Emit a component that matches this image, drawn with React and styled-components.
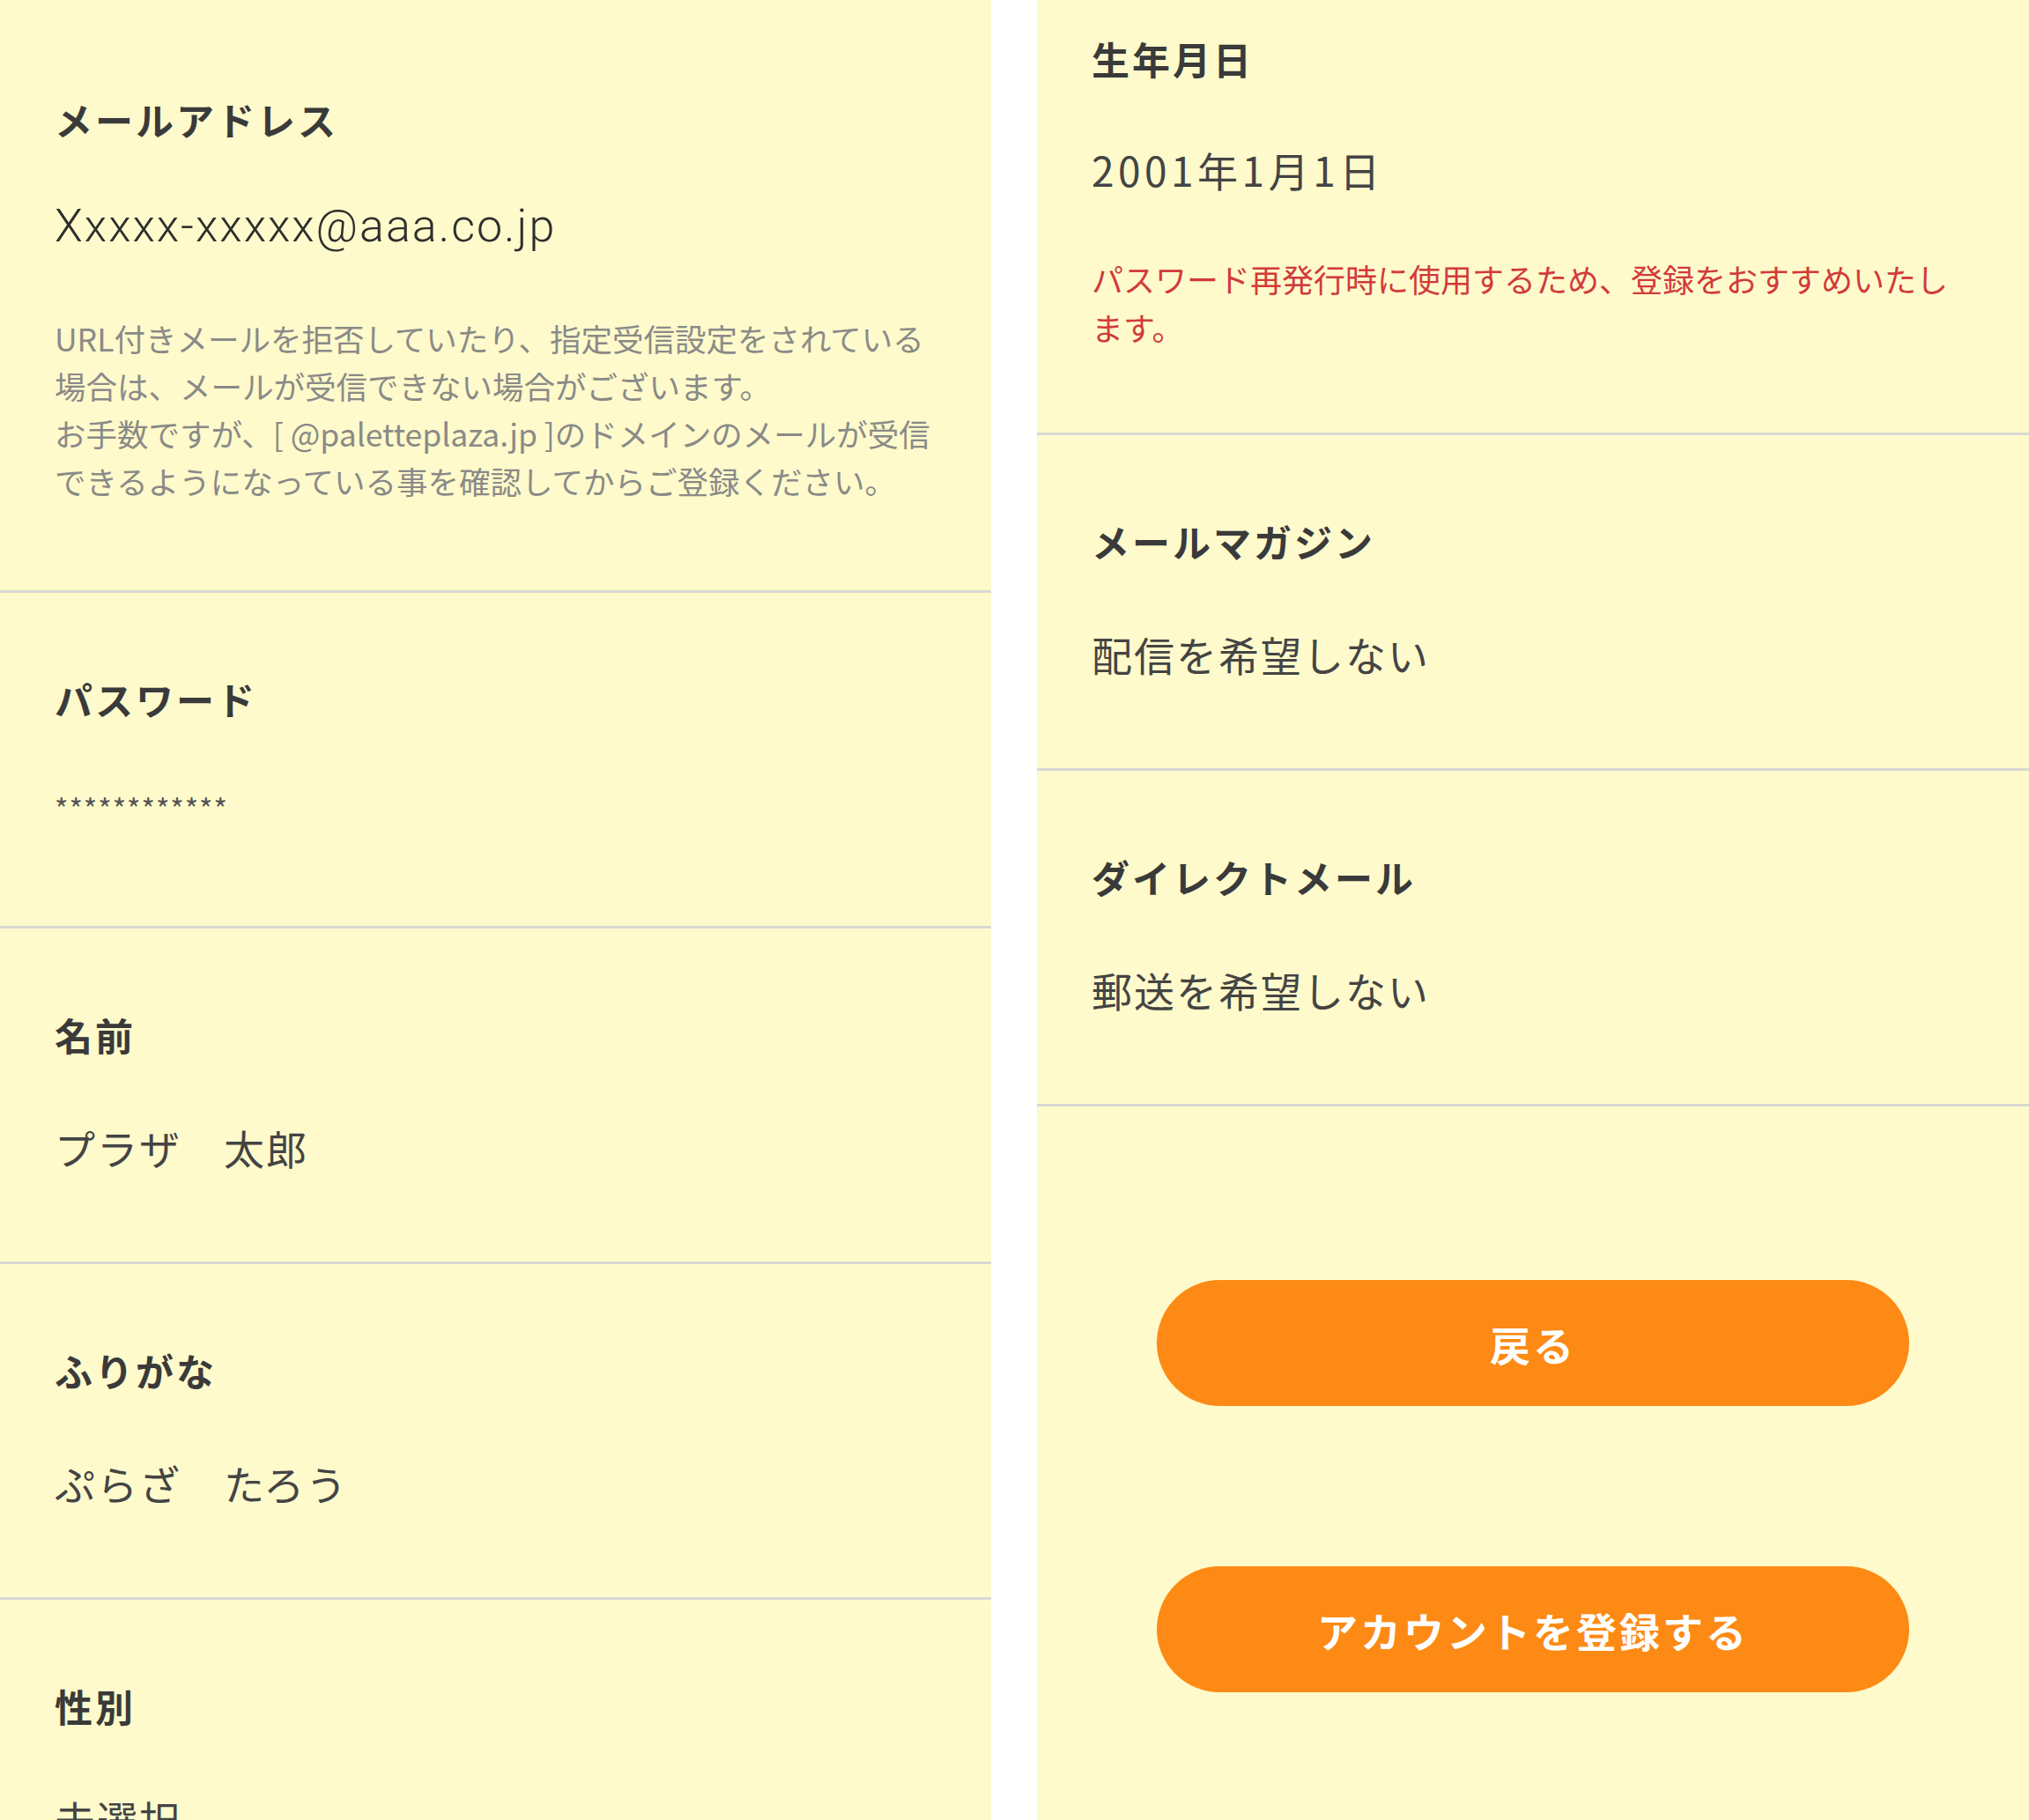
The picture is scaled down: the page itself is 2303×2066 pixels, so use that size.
import styled, { createGlobalStyle } from "styled-components";

const GlobalStyle = createGlobalStyle`
  html, body {
    margin: 0;
    padding: 0;
    background: #ffffff;
  }
  body {
    font-family: "Noto Sans CJK JP", "Noto Sans", sans-serif;
    color: #3a3a3a;
  }
`;

const Page = styled.div`
  display: grid;
  grid-template-columns: 1125px 1126px;
  column-gap: 52px;
  height: 2066px;
  overflow: hidden;
`;

const Panel = styled.div`
  background: #fefacb;
  height: 2066px;
  overflow: hidden;
  display: flex;
  flex-direction: column;
`;

const Section = styled.section`
  padding: ${(p) => p.$top || 92}px 62px ${(p) => p.$bottom || 99}px;
  border-bottom: 3px solid #d9d8d3;
`;

const Label = styled.h3`
  margin: 0;
  font-size: 43px;
  line-height: 57px;
  font-weight: 700;
  letter-spacing: 3px;
  color: #3a3a3a;
`;

const Value = styled.p`
  margin: ${(p) => p.$gap ?? 68}px 0 0;
  font-size: 46px;
  line-height: 62px;
  font-weight: 400;
  letter-spacing: ${(p) => p.$spacing ?? 2}px;
  color: #444;
`;

const Email = styled(Value)`
  font-family: Roboto, "Liberation Sans", "Noto Sans CJK JP", sans-serif;
  font-size: 52px;
  font-weight: 300;
  letter-spacing: 2px;
  color: #2e2e2e;
`;

const Masked = styled(Value)`
  font-size: 33px;
  letter-spacing: 1px;
  color: #555;
`;

const Note = styled.p`
  margin: ${(p) => p.$gap || 62}px 0 0;
  font-size: ${(p) => (p.$warn ? 36 : 35.5)}px;
  line-height: ${(p) => (p.$warn ? 55 : 54)}px;
  color: ${(p) => (p.$warn ? "#d23a3c" : "#8a8a88")};
  white-space: ${(p) => (p.$warn ? "normal" : "nowrap")};
`;

const Actions = styled.div`
  display: flex;
  flex-direction: column;
  align-items: center;
  gap: 182px;
  padding-top: 197px;
`;

const PillButton = styled.button`
  width: 854px;
  height: 143px;
  border: none;
  border-radius: 72px;
  background: #fd8a15;
  color: #ffffff;
  font-family: "Noto Sans CJK JP", sans-serif;
  font-size: 46px;
  font-weight: 700;
  letter-spacing: 3px;
  cursor: pointer;
`;

const Field = ({ label, children, ...rest }) => (
  <Section {...rest}>
    <Label>{label}</Label>
    {children}
  </Section>
);

const App = () => {
  return (
    <>
      <GlobalStyle />
      <Page>
        <Panel>
          <Field label="メールアドレス" $top={107} $bottom={97}>
            <Email $gap={62}>Xxxxx-xxxxx@aaa.co.jp</Email>
            <Note $gap={69}>
              URL付きメールを拒否していたり、指定受信設定をされている
              <br />
              場合は、メールが受信できない場合がございます。
              <br />
              お手数ですが、[ @paletteplaza.jp ]のドメインのメールが受信
              <br />
              できるようになっている事を確認してからご登録ください。
            </Note>
          </Field>
          <Field label="パスワード" $bottom={103}>
            <Masked $gap={64}>************</Masked>
          </Field>
          <Field label="名前">
            <Value>プラザ　太郎</Value>
          </Field>
          <Field label="ふりがな">
            <Value>ぷらざ　たろう</Value>
          </Field>
          <Field label="性別">
            <Value>未選択</Value>
          </Field>
        </Panel>

        <Panel>
          <Field label="生年月日" $top={38} $bottom={92}>
            <Value $spacing={4.5} $gap={66}>
              2001年1月1日
            </Value>
            <Note $warn $gap={66}>
              パスワード再発行時に使用するため、登録をおすすめいたします。
            </Note>
          </Field>
          <Field label="メールマガジン">
            <Value>配信を希望しない</Value>
          </Field>
          <Field label="ダイレクトメール">
            <Value>郵送を希望しない</Value>
          </Field>
          <Actions>
            <PillButton type="button">戻る</PillButton>
            <PillButton type="button">アカウントを登録する</PillButton>
          </Actions>
        </Panel>
      </Page>
    </>
  );
};

export default App;
